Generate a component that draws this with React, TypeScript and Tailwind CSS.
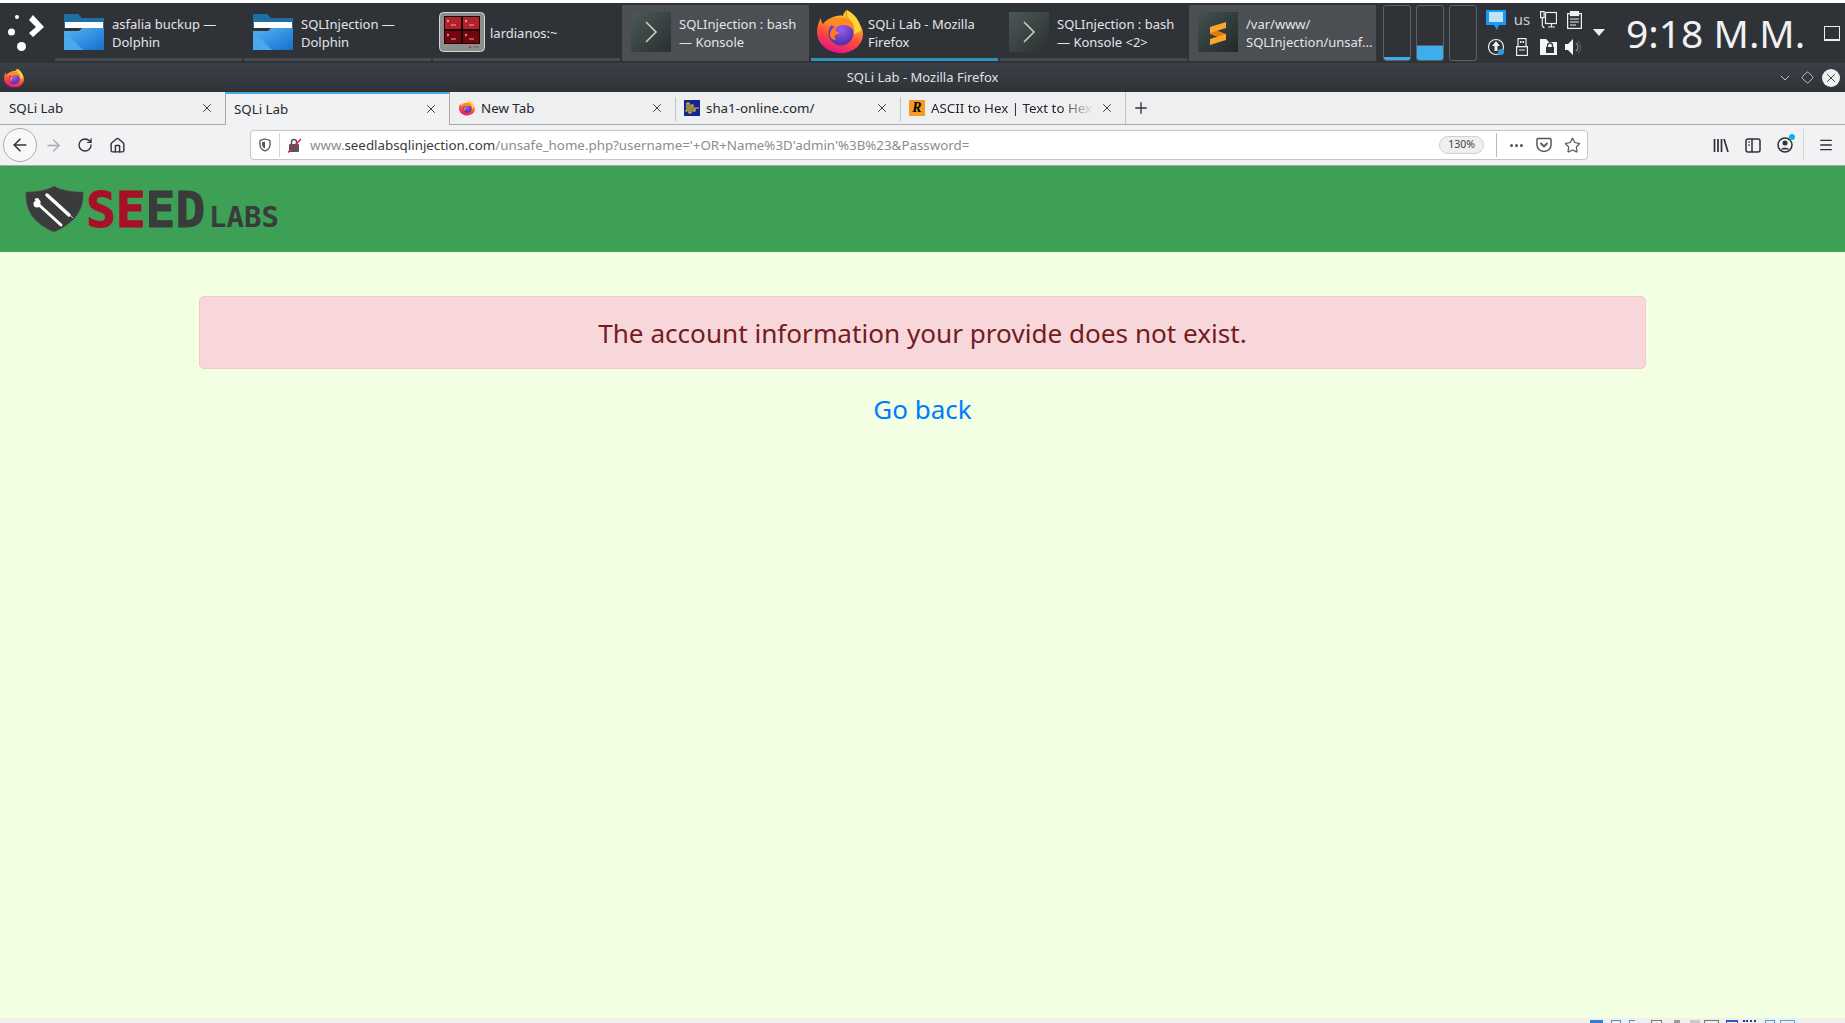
import React, { useId } from 'react';
import { ArrowLeft, ArrowRight, RotateCw, Home, X, Plus, Star, Menu, ChevronDown, Diamond, Ellipsis } from 'lucide-react';

const FirefoxIcon = ({ className }: { className: string }) => {
  const id = useId();
  return (
    <svg viewBox="0 0 46 43" className={className}>
      <defs>
        <linearGradient id={`${id}b`} x1="0.75" y1="0" x2="0.4" y2="1">
          <stop offset="0" stopColor="#ffd43a" />
          <stop offset="0.35" stopColor="#ff9a26" />
          <stop offset="0.65" stopColor="#ff4a3d" />
          <stop offset="1" stopColor="#e31587" />
        </linearGradient>
        <radialGradient id={`${id}c`} cx="0.5" cy="0.35" r="0.7">
          <stop offset="0" stopColor="#9a5cf0" />
          <stop offset="1" stopColor="#4a2aa0" />
        </radialGradient>
      </defs>
      <path d="M30 0c-1 3-1 6 2 9 4 4 6 0 6 0 5 4 8 10 8 15 0 11-10 19-22 19C11 43 0 34 0 22 0 16 2 11 4 8c0 3 1 5 2 6 2-3 5-5 8-6 4-2 9-3 12-2 0-2 2-5 4-6z" fill={`url(#${id}b)`} />
      <path d="M30 0c-1 4 0 8 4 11 3 3 4 8 3 13l7-3C44 12 38 4 30 0z" fill="#ffd23c" />
      <circle cx="24" cy="23" r="12.5" fill={`url(#${id}c)`} />
      <path d="M8 12c3 3 7 2 11 6 3-3 7-4 12-2 3 1 5 3 6 6 1-7-3-13-9-14C20 7 12 8 8 12z" fill="#ff8a1e" />
      <path d="M13 25c0-5 3-8 7-8-3 3-1 5 3 6l-5 2c-1 2 0 4 1 5-3 0-6-2-6-5z" fill="#ff7a1a" />
    </svg>
  );
};

const FolderIcon = () => (
  <svg viewBox="0 0 40 36" className="w-10 h-9">
    <defs>
      <linearGradient id="fold" x1="0" y1="0" x2="1" y2="1">
        <stop offset="0" stopColor="#58b4f2" />
        <stop offset="1" stopColor="#1270d0" />
      </linearGradient>
    </defs>
    <path d="M0 0h14l4 4h22v10H0z" fill="#1f6ea5" />
    <rect x="1" y="8" width="38" height="6" fill="#fff" />
    <path d="M0 17h15l3-3h22v22H0z" fill="url(#fold)" />
    <path d="M0 17l19 19H0z" fill="#4aa8ec" />
  </svg>
);

const KonsoleIcon = () => (
  <svg viewBox="0 0 40 40" className="w-10 h-10">
    <defs>
      <linearGradient id="kon" x1="0" y1="0" x2="1" y2="1">
        <stop offset="0" stopColor="#4c5756" />
        <stop offset="1" stopColor="#293130" />
      </linearGradient>
    </defs>
    <rect width="40" height="40" fill="url(#kon)" />
    <path d="M15 10l10 10-10 10" fill="none" stroke="#c9cccb" strokeWidth="1.6" />
  </svg>
);

const SublimeIcon = () => (
  <svg viewBox="0 0 40 40" className="w-10 h-10">
    <defs>
      <linearGradient id="sub" x1="0" y1="0" x2="1" y2="1">
        <stop offset="0" stopColor="#455250" />
        <stop offset="1" stopColor="#1f2a29" />
      </linearGradient>
    </defs>
    <rect width="40" height="40" fill="url(#sub)" />
    <path d="M12 16l16 6v6l-16-6z" fill="#e07f10" />
    <path d="M12 15l16-5v6l-16 5z" fill="#fca52a" />
    <path d="M12 27l16-5v6l-16 5z" fill="#fca52a" />
  </svg>
);

const TerminalsIcon = () => (
  <svg viewBox="0 0 46 40" className="w-[46px] h-10">
    <rect x="0.5" y="0.5" width="45" height="39" rx="4" fill="#8c8f8c" stroke="#d6d6d6" />
    <rect x="5" y="4" width="36" height="28" fill="#1c0306" />
    {[[6, 5], [24, 5], [6, 19], [24, 19]].map(([x, y]) => (
      <g key={`${x}-${y}`}>
        <rect x={x} y={y} width="16" height="12" fill={y === 5 ? '#b3202b' : '#74060f'} />
        <path d={`M${x + 2} ${y + 3}l2 1-2 1M${x + 6} ${y + 8}h5`} fill="none" stroke="#f2d2d2" strokeWidth="0.8" />
      </g>
    ))}
    <circle cx="31" cy="35" r="1.2" fill="#ee2233" />
    <rect x="34" y="34" width="6" height="2" fill="#777" />
  </svg>
);

const Launcher = () => (
  <svg viewBox="0 0 55 60" className="w-[55px] h-[60px] shrink-0">
    <circle cx="17" cy="14" r="2" fill="#fff" />
    <circle cx="11.5" cy="29" r="3.5" fill="#fff" />
    <circle cx="21.5" cy="43.5" r="4.5" fill="#fff" />
    <path d="M29 17l4-5 11 12-11 10-4-4 7-6z" fill="#fff" />
  </svg>
);

const Task = ({ icon, label, barClass = 'bg-[#474a4f]', bgClass = '' }: { icon: React.ReactNode; label: React.ReactNode; barClass?: string; bgClass?: string }) => (
  <div className={`w-[187px] h-[56px] mt-[2px] shrink-0 flex flex-col ${bgClass}`}>
    <div className="flex-1 flex items-center min-h-0">
      <div className="w-[57px] flex justify-center shrink-0">{icon}</div>
      <div className="text-[13px] leading-[18px] pt-[2px] text-[#e3e5e7] whitespace-pre-line">{label}</div>
    </div>
    <div className={`h-[3px] ${barClass}`} />
  </div>
);

const Pager = ({ fill }: { fill: string }) => (
  <div className="w-[28px] h-[56px] mt-[2px] rounded-[3px] border border-[#5e6166] flex flex-col justify-end overflow-hidden shrink-0">
    <div className={`bg-[#3daee9] ${fill}`} />
  </div>
);

const Tray = () => (
  <div className="grid grid-cols-[26px_26px_26px_26px] grid-rows-[27px_27px] w-[104px] ml-[6px] mt-[3px] place-items-center">
    <svg viewBox="0 0 20 20" className="w-5 h-5">
      <path d="M0 0h20v15H13l-2 5-3-5H0z" fill="#1d99f3" />
      <rect x="3" y="2" width="14" height="10" fill="#bfe2fb" />
    </svg>
    <span className="text-[15px] text-[#c9cccf] leading-none">us</span>
    <svg viewBox="0 0 17 18" className="w-[17px] h-[18px]" fill="none" stroke="#eceff1" strokeWidth="1.2">
      <rect x="5.5" y="1.5" width="11" height="11" />
      <rect x="0.6" y="0.6" width="3.5" height="6" />
      <path d="M2.3 7v8l2 2M8 16h7M11.5 13v3" />
    </svg>
    <svg viewBox="0 0 15 18" className="w-[15px] h-[18px]" fill="none" stroke="#eceff1" strokeWidth="1.2">
      <rect x="0.6" y="2.6" width="13.8" height="14.8" />
      <rect x="3.5" y="0.5" width="8" height="4" fill="#eceff1" />
      <path d="M3 8h9M3 11h9M3 14h6" />
    </svg>
    <svg viewBox="0 0 18 18" className="w-[18px] h-[18px]">
      <circle cx="9" cy="9" r="7.5" fill="none" stroke="#eceff1" strokeWidth="1.2" />
      <path d="M9 3l4 5h-2.500v5h-3V8H5z" fill="#eceff1" />
      <circle cx="14" cy="14" r="3" fill="#2e9be6" />
    </svg>
    <svg viewBox="0 0 12 18" className="w-3 h-[18px]">
      <rect x="2" y="0.6" width="8" height="8" fill="none" stroke="#eceff1" strokeWidth="1.2" />
      <path d="M4 3h1.500v2H4zM6.500 3H8v2H6.500z" fill="#eceff1" />
      <rect x="0.6" y="8.600" width="10.800" height="8.800" fill="none" stroke="#eceff1" strokeWidth="1.2" />
      <path d="M3 12h6" stroke="#eceff1" />
    </svg>
    <svg viewBox="0 0 17 16" className="w-[17px] h-4">
      <path d="M0 0h6l3 3h8v13H0z" fill="#f4f5f6" />
      <rect x="6" y="8" width="8" height="6" fill="#2f3338" />
      <path d="M7.500 8V6.500a2.500 2.500 0 015 0V8" fill="none" stroke="#2f3338" strokeWidth="1.300" />
    </svg>
    <svg viewBox="0 0 18 18" className="w-[18px] h-[18px]">
      <path d="M0 6h3l5-5v16l-5-5H0z" fill="#f4f5f6" />
      <path d="M11 5a5 5 0 010 8" fill="none" stroke="#8a8d90" strokeWidth="1.200" />
      <path d="M13 3a8 8 0 010 12" fill="none" stroke="#55585c" strokeWidth="1.200" />
    </svg>
  </div>
);

const Panel = () => (
  <div className="h-[60px] bg-[#2f3338] flex shrink-0">
    <Launcher />
    <div className="flex gap-[2px]">
      <Task icon={<FolderIcon />} label={'asfalia buckup —\nDolphin'} />
      <Task icon={<FolderIcon />} label={'SQLInjection —\nDolphin'} />
      <Task icon={<TerminalsIcon />} label="lardianos:~" />
      <Task icon={<KonsoleIcon />} label={'SQLInjection : bash\n— Konsole'} bgClass="bg-[#4b4e53]" barClass="bg-[#4b4e53]" />
      <Task icon={<FirefoxIcon className="w-[46px] h-[43px]" />} label={'SQLi Lab - Mozilla\nFirefox'} barClass="bg-[#3190b8]" />
      <Task icon={<KonsoleIcon />} label={'SQLInjection : bash\n— Konsole <2>'} />
      <Task icon={<SublimeIcon />} label={'/var/www/\nSQLInjection/unsaf...'} bgClass="bg-[#4b4e53]" barClass="bg-[#4b4e53]" />
    </div>
    <div className="flex gap-[5px] ml-[7px]">
      <Pager fill="h-[3px]" />
      <Pager fill="h-[15px] border-t border-[#5e6166]" />
      <Pager fill="h-0" />
    </div>
    <Tray />
    <div className="ml-[6px] mt-[26px] w-0 h-0 border-x-[6px] border-x-transparent border-t-[7px] border-t-[#eceff1]" />
    <div className="ml-[21px] mt-[5px] w-[178px] text-[39px] leading-[50px] text-[#eff1f3] whitespace-nowrap">9:18 M.M.</div>
    <div className="ml-[20px] mt-[23px] w-[16px] h-[15px] border border-[#eceff1] border-b-2 shrink-0" />
  </div>
);

const TitleBar = () => (
  <div className="h-[29px] shrink-0 bg-gradient-to-b from-[#3b4047] to-[#2f3338] flex items-center pl-[4px] pr-[5px]">
    <FirefoxIcon className="w-[20px] h-[20px] shrink-0" />
    <div className="flex-1 text-center text-[13px] text-[#dfe1e3] pl-[44px]">SQLi Lab - Mozilla Firefox</div>
    <div className="flex items-center gap-[6px]">
      <ChevronDown className="w-[16px] h-[16px] text-[#d8dadc]" strokeWidth={1.3} />
      <Diamond className="w-[13px] h-[13px] text-[#e8eaec] ml-[2px]" strokeWidth={1.4} />
      <div className="w-[18px] h-[18px] rounded-full bg-[#eff0f1] flex items-center justify-center ml-[2px]">
        <X className="w-[14px] h-[14px] text-[#2f3338]" strokeWidth={1.6} />
      </div>
    </div>
  </div>
);

const Favicon = ({ kind }: { kind: 'ff' | 'sha' | 'r' }) => {
  if (kind === 'ff') return <FirefoxIcon className="w-4 h-4 shrink-0 mr-[6px]" />;
  if (kind === 'sha') {
    return (
      <svg viewBox="0 0 16 16" className="w-4 h-4 shrink-0 mr-[6px]">
        <rect width="16" height="16" fill="#12249c" />
        <path d="M1 11h2V3h2v10h2V5h2v6h2V8h4" fill="none" stroke="#f2c811" strokeWidth="1.200" />
      </svg>
    );
  }
  return (
    <div className="w-4 h-4 shrink-0 mr-[6px] bg-[#f59a23] flex items-center justify-center text-[14px] leading-none font-bold italic text-black font-['Liberation_Serif',serif]">R</div>
  );
};

const Tab = ({ label, fav, active, fade, divider }: { label: string; fav?: 'ff' | 'sha' | 'r'; active?: boolean; fade?: boolean; divider?: boolean }) => (
  <div className={`w-[225px] shrink-0 flex items-center pr-[11px] text-[13.330px] text-[#25272a] relative ${active ? 'pl-[8px] bg-[#f1f2f4] border-x border-[#a9a9a9] border-t-[2px] border-t-[#45ade2] h-[33px] -mb-px z-10' : 'pl-[9px] h-[32px]'}`}>
    {divider && <div className="absolute left-0 top-[5px] h-[24px] w-px bg-[#c2c3c5]" />}
    {fav && <Favicon kind={fav} />}
    <span className={`flex-1 overflow-hidden whitespace-nowrap ${active ? '' : 'mt-[2px]'} ${fade ? '[mask-image:linear-gradient(to_right,black_80%,transparent)]' : ''}`}>{label}</span>
    <X className={`w-[14px] h-[14px] text-[#3a3c3f] shrink-0 ml-[6px] ${active ? '-mt-[2px]' : ''}`} strokeWidth={1.7} />
  </div>
);

const TabBar = () => (
  <div className="h-[33px] shrink-0 bg-[#eeeff1] border-b border-[#a9a9a9] flex">
    <Tab label="SQLi Lab" />
    <Tab label="SQLi Lab" active />
    <Tab label="New Tab" fav="ff" />
    <Tab label="sha1-online.com/" fav="sha" divider />
    <Tab label="ASCII to Hex | Text to Hex" fav="r" fade divider />
    <div className="h-[32px] flex items-center pl-[6px] border-l border-[#c2c3c5]">
      <Plus className="w-[18px] h-[18px] text-[#2f3134]" strokeWidth={1.8} />
    </div>
  </div>
);

const Toolbar = () => (
  <div className="h-[41px] shrink-0 bg-[#f1f2f4] flex items-center text-[#2f3134] border-b border-[#a9a9a9]">
    <div className="ml-[3px] w-[34px] h-[34px] rounded-full border border-[#a9abae] bg-[#f8f8f9] flex items-center justify-center shrink-0">
      <ArrowLeft className="w-[20px] h-[20px]" strokeWidth={1.8} />
    </div>
    <ArrowRight className="ml-[7px] w-[19px] h-[19px] text-[#a9abae] shrink-0" strokeWidth={1.6} />
    <RotateCw className="ml-[14px] w-[16px] h-[16px] shrink-0" strokeWidth={2} />
    <Home className="ml-[16px] w-[17px] h-[17px] shrink-0" strokeWidth={2} />
    <div className="ml-[124px] w-[1338px] h-[30px] bg-white border border-[#c4c5c7] rounded-[4px] flex items-center shrink-0 pr-[6px]">
      <svg viewBox="0 0 12 14" className="ml-[8px] w-[12px] h-[14px] shrink-0">
        <path d="M6 1l5 1.500V7c0 3-2.500 5-5 6-2.500-1-5-3-5-6V2.500z" fill="none" stroke="#55575a" strokeWidth="1.300" />
        <path d="M6 3.500V10.500C4.500 10 3 8.500 3 7V4.300z" fill="#55575a" />
      </svg>
      <div className="ml-[8px] w-px h-[24px] bg-[#d4d5d7] shrink-0" />
      <svg viewBox="0 0 15 15" className="ml-[7px] w-[15px] h-[15px] shrink-0">
        <rect x="2" y="6" width="10" height="8" rx="1" fill="#55575a" />
        <path d="M4.500 6V4a2.500 2.500 0 015 0v2" fill="none" stroke="#55575a" strokeWidth="1.500" />
        <path d="M1 14.500L14 1" stroke="#e2203a" strokeWidth="1.600" />
      </svg>
      <div className="ml-[8px] flex-1 pt-[2px] text-[13.330px] whitespace-nowrap overflow-hidden text-[#8b8d90]">
        <span>www.</span>
        <span className="text-[#3a3c3f]">seedlabsqlinjection.com</span>
        <span>/unsafe_home.php?username='+OR+Name%3D'admin'%3B%23&Password=</span>
      </div>
      <div className="w-[45px] h-[18px] rounded-full bg-[#eeeff1] border border-[#cfd0d2] text-[10.500px] text-[#3f4144] flex items-center justify-center shrink-0">130%</div>
      <div className="ml-[12px] w-px h-[24px] bg-[#b9babc] shrink-0" />
      <Ellipsis className="ml-[11px] w-[17px] h-[17px] text-[#55575a] shrink-0" strokeWidth={2.4} />
      <svg viewBox="0 0 16 16" className="ml-[11px] w-[16px] h-[16px] shrink-0">
        <path d="M2 1.500h12a1 1 0 011 1V8c0 3.500-3 6.500-7 6.500S1 11.500 1 8V2.500a1 1 0 011-1z" fill="none" stroke="#55575a" strokeWidth="1.500" />
        <path d="M4.500 6L8 9.500 11.500 6" fill="none" stroke="#55575a" strokeWidth="1.800" />
      </svg>
      <Star className="ml-[12px] w-[17px] h-[17px] text-[#55575a] shrink-0" strokeWidth={1.7} />
    </div>
    <svg viewBox="0 0 16 15" className="ml-[125px] w-[16px] h-[15px] shrink-0" stroke="#2f3134" strokeWidth="1.700" fill="none">
      <path d="M1.500 1v13M5 1v13M8.500 1v13M11 1l4 13" />
    </svg>
    <svg viewBox="0 0 16 15" className="ml-[16px] w-[16px] h-[15px] shrink-0" fill="none" stroke="#2f3134" strokeWidth="1.500">
      <rect x="1" y="1" width="14" height="13" rx="2" />
      <path d="M7 1v13" />
      <path d="M3 4h2M3 7h2" strokeWidth="1" />
    </svg>
    <div className="ml-[16px] relative w-[16px] h-[16px] shrink-0">
      <svg viewBox="0 0 16 16" className="w-[16px] h-[16px]">
        <circle cx="8" cy="8" r="7" fill="none" stroke="#2f3134" strokeWidth="1.500" />
        <circle cx="8" cy="6" r="2.500" fill="#2f3134" />
        <path d="M3.500 12.500c1-2.500 8-2.500 9 0z" fill="#2f3134" />
      </svg>
      <div className="absolute -top-[3px] -right-[2px] w-[6px] h-[6px] rounded-full bg-[#18aaf5]" />
    </div>
    <div className="ml-[10px] w-px h-[32px] bg-[#d4d5d7] shrink-0" />
    <Menu className="ml-[14px] w-[16px] h-[16px] shrink-0" strokeWidth={2} />
  </div>
);

const SeedLogo = () => (
  <svg viewBox="0 0 290 86" className="w-[290px] h-[86px] font-['DejaVu_Sans_Mono',monospace]">
    <path d="M54 20c6 4 18 6 29 6 1 18-8 31-29 40-21-9-29-22-28-40 11 0 22-2 28-6z" fill="#3a3b3d" stroke="#555" strokeWidth="0.600" />
    <path d="M47 29l22 20" stroke="#fff" strokeWidth="3.500" strokeLinecap="round" />
    <path d="M60 40l13 12" stroke="#e8e8e8" strokeWidth="0.900" />
    <path d="M38 38l23 21" stroke="#fff" strokeWidth="3" strokeLinecap="round" />
    <path d="M35 34l3 3 3-1-3-4c-3 0-4 1-3 2z" fill="#fff" />
    <circle cx="37" cy="38" r="3.500" fill="#fff" />
    <text x="86" y="61" fontSize="49.500" fontWeight="700" strokeWidth="1">
      <tspan fill="#a80f28" stroke="#a80f28">SE</tspan>
      <tspan fill="#3a3b3d" stroke="#3a3b3d">ED</tspan>
    </text>
    <text x="209" y="61" fontSize="29" fontWeight="700" fill="#3a3b3d">LABS</text>
  </svg>
);

const BottomStrip = () => {
  const bits = [
    ['w-[13px] bg-[#2f7fd6]', 'ml-[1590px]'],
    ['w-[10px] border-t border-x border-[#4a90d9]', 'ml-[8px]'],
    ['w-[6px] border-t border-l border-[#4a90d9]', 'ml-[8px]'],
    ['w-[11px] border-t border-x border-[#777]', 'ml-[16px]'],
    ['w-[6px] bg-[#999]', 'ml-[12px]'],
    ['w-[10px] bg-[#c9c9c9]', 'ml-[10px]'],
    ['w-[15px] border-t border-x border-[#777]', 'ml-[4px]'],
    ['w-[12px] border-t-2 border-x border-[#2f55c9]', 'ml-[7px]'],
    ['w-[13px] border-t-2 border-dotted border-[#23389c]', 'ml-[5px]'],
    ['w-[10px] border-t border-x border-[#4a9ad9]', 'ml-[9px]'],
    ['w-[15px] border-t border-x border-[#4aa5e9]', 'ml-[5px]'],
  ];
  return (
    <div className="h-[5px] bg-[#efefef] flex items-end shrink-0">
      {bits.map(([shape, gap], i) => (
        <div key={i} className={`h-[3px] ${shape} ${gap}`} />
      ))}
    </div>
  );
};

export default function App() {
  return (
    <div className="h-screen flex flex-col overflow-hidden bg-white pt-[3px] font-['Noto_Sans',sans-serif]">
      <Panel />
      <TitleBar />
      <TabBar />
      <Toolbar />
      <div className="h-[86px] bg-[#3ea055] shrink-0">
        <SeedLogo />
      </div>
      <div className="flex-1 bg-[#f3ffe3] min-h-0 pt-[44px]">
        <div className="w-[1447px] mx-auto h-[73px] pt-[2px] bg-[#f8d7da] border border-[#f5c6cb] rounded-[5px] flex items-center justify-center text-[26.130px] text-[#721c24]">
          The account information your provide does not exist.
        </div>
        <div className="mt-[21px] text-center text-[26px] leading-[39px]">
          <a className="text-[#007bff]">Go back</a>
        </div>
      </div>
      <BottomStrip />
    </div>
  );
}
